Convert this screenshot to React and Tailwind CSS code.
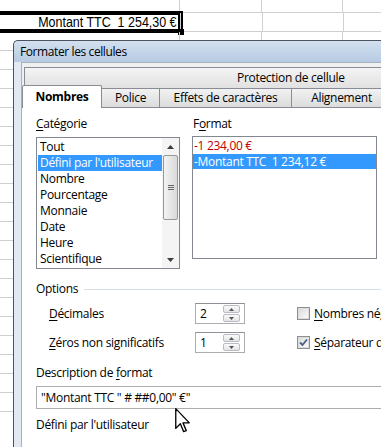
import React from 'react';

// Spreadsheet rows behind the dialog
const sheetRows = Array.from({ length: 22 }, (_, i) => i);

const categories = [
  'Tout',
  "Défini par l'utilisateur",
  'Nombre',
  'Pourcentage',
  'Monnaie',
  'Date',
  'Heure',
  'Scientifique',
];

function SheetRow({ index }) {
  const first = index === 0;
  const selected = index === 1;
  return (
    <div className={`flex border-b border-[#d0d0d0] ${first ? 'h-[13px]' : 'h-[19px]'}`}>
      <div className={`relative w-[180px] shrink-0 border-r border-[#d0d0d0] ${selected ? 'shadow-[inset_0_0_0_2px_#000] outline-2 outline-black -ml-[4px] w-[185px]' : ''}`}>
        {selected && (
          <>
            <div className="flex h-full items-center justify-end whitespace-nowrap pr-[4px] text-[14.5px] leading-none text-black scale-x-[0.86] origin-right" style={{ fontFamily: '"Liberation Sans", Arial, sans-serif' }}>
              Montant TTC&nbsp;&nbsp;1 254,30 €
            </div>
            <div className="absolute -right-[4px] -bottom-[4px] h-[6px] w-[6px] bg-black" />
          </>
        )}
      </div>
      <div className="w-[82px] shrink-0 border-r border-[#d0d0d0]" />
      <div className="w-[81px] shrink-0 border-r border-[#d0d0d0]" />
      <div className="flex-1" />
    </div>
  );
}

function Underline({ children }) {
  return <span className="underline underline-offset-2 decoration-1">{children}</span>;
}

function SpinBox({ value }) {
  return (
    <div className="flex h-[21px] w-[50px] shrink-0 items-center border border-[#abadb3] border-t-[#8e9097] bg-white pl-[4px]">
      <span className="flex-1">{value}</span>
      <div className="mr-[4px] flex h-[17px] w-[17px] flex-col gap-px">
        <div className="flex flex-1 items-center justify-center rounded-[2px] border border-[#b9bcc2] bg-gradient-to-b from-[#fbfbfb] to-[#e4e4e4]">
          <svg width="5" height="3" viewBox="0 0 5 3"><path d="M0 3 L2.5 0 L5 3 Z" fill="#555" /></svg>
        </div>
        <div className="flex flex-1 items-center justify-center rounded-[2px] border border-[#b9bcc2] bg-gradient-to-b from-[#fbfbfb] to-[#e4e4e4]">
          <svg width="5" height="3" viewBox="0 0 5 3"><path d="M0 0 L2.5 3 L5 0 Z" fill="#555" /></svg>
        </div>
      </div>
    </div>
  );
}

function CheckBox({ checked }) {
  return (
    <div className="flex h-[13px] w-[13px] shrink-0 items-center justify-center border border-[#8e8f8f] bg-white">
      <div className="flex h-[11px] w-[11px] items-center justify-center border border-[#dcdcdc] bg-gradient-to-br from-[#dcdcdc] to-[#fafafa]">
        {checked && (
          <svg width="9" height="9" viewBox="0 0 9 9">
            <path d="M1 4.5 L3.5 7 L8 1.5" fill="none" stroke="#4b5c84" strokeWidth="1.8" />
          </svg>
        )}
      </div>
    </div>
  );
}

function Tab({ label, active, width }) {
  if (active) {
    return (
      <div className={`relative z-10 -mt-[3px] -mb-px flex h-[23px] ${width} shrink-0 items-center justify-center rounded-t-[2px] border border-b-0 border-[#898c95] bg-white font-bold`}>
        {label}
      </div>
    );
  }
  return (
    <div className={`flex h-[19px] ${width} shrink-0 items-center justify-center whitespace-nowrap border border-b-0 border-l-0 border-[#898c95] bg-gradient-to-b from-[#f2f2f2] to-[#dcdcdc]`}>
      {label}
    </div>
  );
}

export default function App() {
  return (
    <div className="relative h-[447px] w-[381px] overflow-hidden bg-white">
      {/* sheet background */}
      <div>
        {sheetRows.map((i) => (
          <SheetRow key={i} index={i} />
        ))}
      </div>

      {/* dialog window */}
      <div
        className="absolute left-[13px] top-[40px] flex h-[420px] w-[400px] flex-col rounded-tl-[5px] border-l border-t border-[#4c5360] bg-[#e3e9f1] text-[12px] leading-[16px] text-black"
        style={{ fontFamily: '"Open Sans", "Noto Sans", sans-serif' }}
      >
        <div className="flex h-[21px] items-center rounded-tl-[5px] bg-gradient-to-b from-[#d3e0ef] to-[#b7cbe3] pl-[6px] tracking-[-0.4px]">
          Formater les cellules
        </div>
        <div className="ml-[7px] flex flex-1 flex-col border-l border-t border-[#a7b0bd] bg-[#f0f0f0] pt-[4px] tracking-[-0.3px]">
          {/* back tab row */}
          <div className="ml-[2px] flex h-[21px] items-center whitespace-nowrap border border-b-0 border-[#898c95] bg-gradient-to-b from-[#f4f4f4] to-[#e1e1e1] pl-[212px]">
            Protection de cellule
          </div>
          {/* front tab row */}
          <div className="flex h-[19px] items-end">
            <Tab label="Nombres" active width="w-[80px]" />
            <Tab label="Police" width="w-[58px]" />
            <Tab label="Effets de caractères" width="w-[132px]" />
            <Tab label="Alignement" width="w-[100px]" />
          </div>

          {/* tab panel */}
          <div className="flex flex-1 flex-col border-t border-[#898c95] bg-white pl-[14px] pt-[8px] text-[12px]">
            <div className="flex gap-[12px]">
              <div className="flex w-[144px] shrink-0 flex-col gap-[5px]">
                <div><Underline>C</Underline>atégorie</div>
                <div className="flex h-[132px] border border-[#828790] bg-white">
                  <div className="flex flex-1 flex-col pl-px pt-px">
                    {categories.map((c, i) => (
                      <div key={c} className={`h-[16px] whitespace-nowrap pl-[2px] leading-[16px] ${i === 1 ? 'bg-[#3399ff] text-white' : ''}`}>
                        {c}
                      </div>
                    ))}
                  </div>
                  <div className="flex w-[17px] flex-col bg-[#f4f4f4]">
                    <div className="flex h-[17px] items-center justify-center">
                      <svg width="7" height="4" viewBox="0 0 7 4"><path d="M0 4 L3.5 0 L7 4 Z" fill="#3c3c3c" /></svg>
                    </div>
                    <div className="mx-px flex h-[65px] items-center justify-center rounded-[2px] border border-[#979797] bg-gradient-to-r from-[#f3f3f3] to-[#d9d9d9]">
                      <div className="flex flex-col gap-px">
                        <div className="h-px w-[6px] bg-[#666]" />
                        <div className="h-px w-[6px] bg-[#666]" />
                        <div className="h-px w-[6px] bg-[#666]" />
                      </div>
                    </div>
                    <div className="flex-1" />
                    <div className="flex h-[17px] items-center justify-center">
                      <svg width="7" height="4" viewBox="0 0 7 4"><path d="M0 0 L3.5 4 L7 0 Z" fill="#3c3c3c" /></svg>
                    </div>
                  </div>
                </div>
              </div>
              <div className="flex w-[185px] shrink-0 flex-col gap-[4px]">
                <div className="pl-px">F<Underline>o</Underline>rmat</div>
                <div className="flex h-[123px] flex-col border border-[#828790] bg-white pt-px">
                  <div className="h-[16px] whitespace-nowrap pl-px text-[#c00000]">-1 234,00 €</div>
                  <div className="h-[15px] whitespace-nowrap bg-[#3399ff] pl-px leading-[15px] text-white">-Montant TTC&nbsp;&nbsp;1 234,12 €</div>
                </div>
              </div>
            </div>

            {/* options */}
            <div className="mt-[12px] flex items-center gap-[6px]">
              <span>Options</span>
              <div className="h-px flex-1 bg-[#d5dfe5]" />
            </div>
            <div className="mt-[6px] flex items-center whitespace-nowrap">
              <div className="w-[159px] shrink-0 pl-[13px]"><Underline>D</Underline>écimales</div>
              <SpinBox value="2" />
              <div className="ml-[52px] flex shrink-0 items-center gap-[4px]">
                <CheckBox />
                <span><Underline>N</Underline>ombres négatifs en rouge</span>
              </div>
            </div>
            <div className="mt-[8px] flex items-center whitespace-nowrap">
              <div className="w-[159px] shrink-0 pl-[13px]"><Underline>Z</Underline>éros non significatifs</div>
              <SpinBox value="1" />
              <div className="ml-[52px] flex shrink-0 items-center gap-[4px]">
                <CheckBox checked />
                <span><Underline>S</Underline>éparateur de milliers</span>
              </div>
            </div>

            <div className="mt-[12px]">Description de <Underline>f</Underline>ormat</div>
            <div className="mt-[5px] flex h-[23px] items-center whitespace-nowrap border border-[#abadb3] bg-white pl-[4px]">
              "Montant TTC " # ##0,00" €"
            </div>
            <div className="mt-[8px]">Défini par l'utilisateur</div>
          </div>
        </div>
      </div>

      {/* mouse pointer */}
      <svg className="absolute left-[175px] top-[408px]" width="16" height="25" viewBox="0 0 12 19">
        <path d="M0.5 0.5 L0.5 15.5 L4 12 L6.5 18 L8.5 17.2 L6 11.3 L10.8 11.3 Z" fill="white" stroke="black" strokeWidth="1" strokeLinejoin="round" />
      </svg>
    </div>
  );
}
